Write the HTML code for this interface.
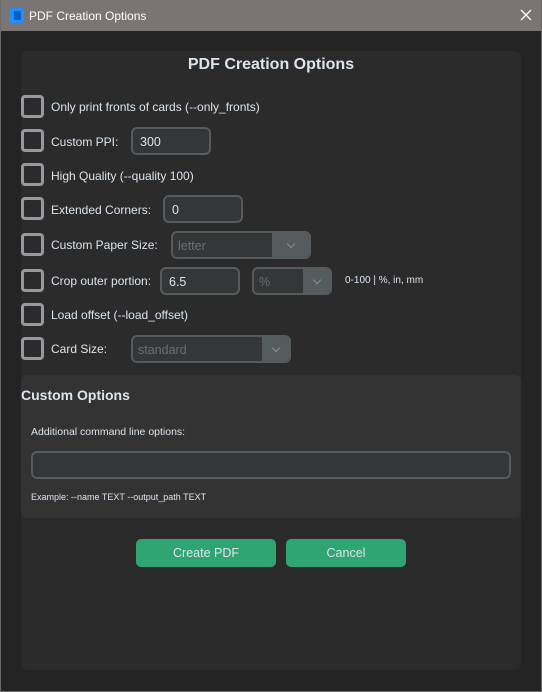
<!DOCTYPE html>
<html><head><style>
*{box-sizing:border-box;margin:0;padding:0}
body{width:542px;height:692px;background:#242424;font-family:"Liberation Sans",sans-serif;color:#dce4ee;position:relative;overflow:hidden}
.bd{position:absolute;left:0;top:0;width:542px;height:692px;border:1px solid #6a6a6a;border-top:none}
.tb{position:absolute;left:0;top:0;width:542px;height:31px;background:#7a7574;color:#fff;font-size:12px}
.tb .t{position:absolute;left:29px;top:9px}
.tb .ic{position:absolute;left:9px;top:8px;width:15px;height:15px;border-radius:3px;background:#1e90ff}
.tb .ic:after{content:"";position:absolute;left:5px;top:3px;width:7px;height:9px;background:#0a5fc0;border-radius:1px}
.panel{position:absolute;left:21px;top:51px;width:500px;height:619px;background:#2b2b2b;border-radius:6px}
.abs{position:absolute}
h1{position:absolute;left:0;width:542px;top:56px;text-align:center;font-size:16px;font-weight:bold}
.cb{position:absolute;left:21px;width:23px;height:23px;border:3px solid #949a9f;border-radius:4px}
.lb{position:absolute;left:51px;font-size:12px;margin-top:1px}
.in{position:absolute;height:28px;border:2px solid #565b5e;border-radius:6px;background:#343638;font-size:12.5px;padding:6px 0 0 7px;color:#dce4ee}
.cbx{position:absolute;height:28px;border:2px solid #565b5e;border-radius:6px;background:#343638;font-size:12.5px;padding:6px 0 0 5px;color:#6e6e6e;overflow:hidden}
.cbx .ar{position:absolute;right:0;top:0;width:37px;height:100%;background:#565b5e}
.cbx .ar:after{content:"";position:absolute;left:50%;margin-left:-3px;top:8px;width:5px;height:5px;border-right:1.5px solid #8a8e91;border-bottom:1.5px solid #8a8e91;transform:rotate(45deg)}
.cp{position:absolute;left:21px;top:375px;width:500px;height:143px;background:#333333;border-radius:6px}
.btn{position:absolute;top:539px;height:28px;background:#2fa572;border-radius:5px;font-size:12.5px;text-align:center;padding-top:7px;color:#dce4ee}
</style></head><body>
<div class="tb"><div class="ic"></div><div class="t">PDF Creation Options</div>
<svg class="abs" style="left:520px;top:9px" width="12" height="12"><path d="M1 1L11 11M11 1L1 11" stroke="#fff" stroke-width="1.3"/></svg></div>
<div class="bd"></div>
<div class="panel"></div>
<h1>PDF Creation Options</h1>
<div class="cb" style="top:95px"></div><div class="lb" style="top:99px">Only print fronts of cards (--only_fronts)</div>
<div class="cb" style="top:129px"></div><div class="lb" style="top:134px">Custom PPI:</div>
<div class="in" style="left:131px;top:127px;width:80px">300</div>
<div class="cb" style="top:163px"></div><div class="lb" style="top:168px">High Quality (--quality 100)</div>
<div class="cb" style="top:197px"></div><div class="lb" style="top:202px">Extended Corners:</div>
<div class="in" style="left:163px;top:195px;width:80px">0</div>
<div class="cb" style="top:233px"></div><div class="lb" style="top:237px">Custom Paper Size:</div>
<div class="cbx" style="left:171px;top:231px;width:140px">letter<div class="ar"></div></div>
<div class="cb" style="top:269px"></div><div class="lb" style="top:273px">Crop outer portion:</div>
<div class="in" style="left:160px;top:267px;width:80px">6.5</div>
<div class="cbx" style="left:252px;top:267px;width:80px">%<div class="ar" style="width:27px"></div></div>
<div class="abs" style="left:345px;top:275px;font-size:10px">0-100 | %, in, mm</div>
<div class="cb" style="top:303px"></div><div class="lb" style="top:307px">Load offset (--load_offset)</div>
<div class="cb" style="top:337px"></div><div class="lb" style="top:341px">Card Size:</div>
<div class="cbx" style="left:131px;top:335px;width:160px">standard<div class="ar" style="width:27px"></div></div>
<div class="cp"></div>
<div class="abs" style="left:21px;top:387px;font-size:14px;font-weight:bold">Custom Options</div>
<div class="abs" style="left:31px;top:426px;font-size:10.5px">Additional command line options:</div>
<div class="in" style="left:31px;top:451px;width:480px"></div>
<div class="abs" style="left:31px;top:492px;font-size:9px">Example: --name TEXT --output_path TEXT</div>
<div class="btn" style="left:136px;width:140px">Create PDF</div>
<div class="btn" style="left:286px;width:120px">Cancel</div>
</body></html>
